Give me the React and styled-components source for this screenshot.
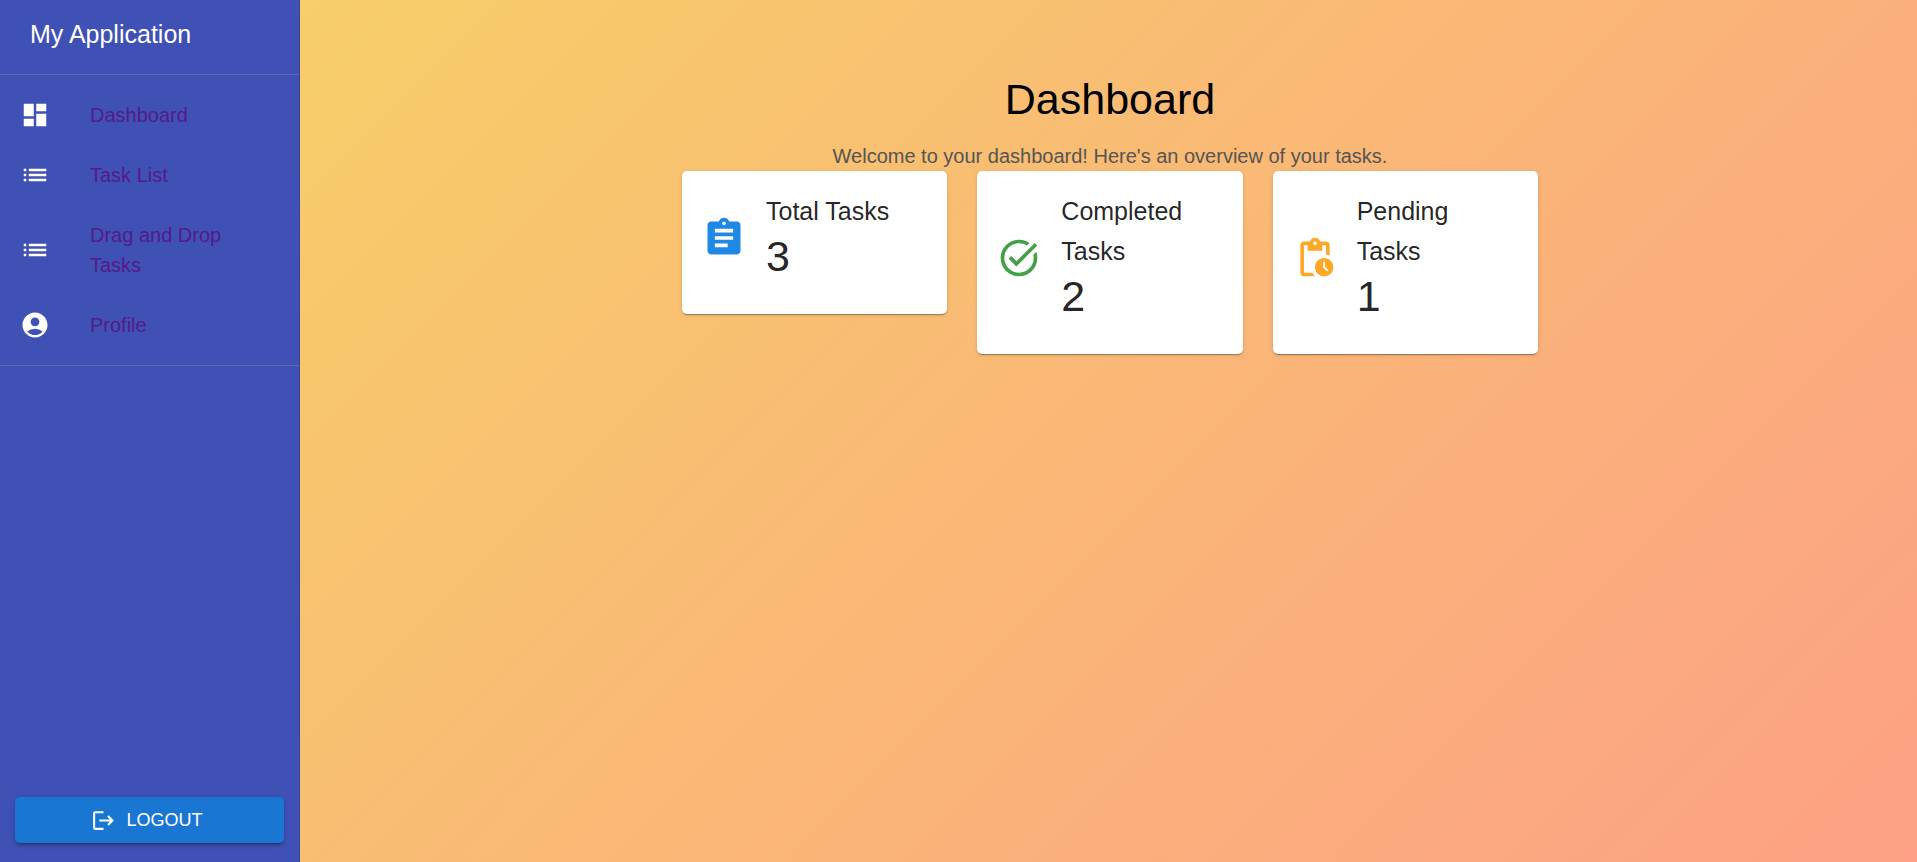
import React from 'react';
import styled, { createGlobalStyle } from 'styled-components';
import {
  MdDashboard,
  MdList,
  MdAccountCircle,
  MdLogout,
  MdAssignment,
  MdTaskAlt,
  MdPendingActions,
} from 'react-icons/md';

const GlobalStyle = createGlobalStyle`
  *, *::before, *::after { box-sizing: border-box; }
  body {
    margin: 0;
    font-family: "Liberation Sans", Arial, sans-serif;
    font-size: 20px;
    line-height: 30px;
    color: rgba(0, 0, 0, 0.87);
  }
`;

const Layout = styled.div`
  display: flex;
  min-height: 100vh;
  background: linear-gradient(135deg, #f6d365 0%, #fda085 100%);
`;

const Sidebar = styled.aside`
  display: flex;
  flex-direction: column;
  flex: 0 0 300px;
  background: #3f51b5;
  border-right: 1px solid rgba(0, 0, 0, 0.15);
`;

const AppTitle = styled.div`
  padding: 14px 30px 20px;
  font-size: 25px;
  line-height: 40px;
  color: #fff;
`;

const NavList = styled.ul`
  list-style: none;
  margin: 0;
  padding: 10px 0;
  border: solid #5d66a9;
  border-width: 1px 0;
`;

const NavLink = styled.a`
  display: flex;
  align-items: center;
  gap: 40px;
  padding: 15px 30px 15px 20px;
  color: #551a8b;
  text-decoration: none;

  svg {
    flex: none;
    width: 30px;
    height: 30px;
    color: #fff;
  }
`;

const SidebarFooter = styled.div`
  margin-top: auto;
  padding: 15px 15px 19px;
`;

const LogoutButton = styled.button`
  display: flex;
  align-items: center;
  justify-content: center;
  gap: 10px;
  width: 100%;
  padding: 8px 20px;
  border: 0;
  border-radius: 5px;
  background: #1976d2;
  color: #fff;
  font: inherit;
  font-size: 18px;
  text-transform: uppercase;
  cursor: pointer;
  box-shadow: 0 4px 1px -3px rgba(0, 0, 0, 0.2), 0 3px 3px rgba(0, 0, 0, 0.14),
    0 1px 6px rgba(0, 0, 0, 0.12);

  svg {
    width: 25px;
    height: 25px;
    margin-left: -5px;
  }
`;

const Main = styled.main`
  flex: 1;
  padding: 73px 27px 30px 30px;
`;

const Content = styled.div`
  max-width: 856px;
  margin: 0 auto;
`;

const PageTitle = styled.h1`
  margin: 0 0 16px;
  font-size: 43px;
  font-weight: 400;
  line-height: 52px;
  text-align: center;
  color: #000;
`;

const Intro = styled.p`
  margin: 0;
  text-align: center;
  color: #555;
`;

const CardGrid = styled.div`
  display: grid;
  grid-template-columns: repeat(3, 1fr);
  align-items: start;
  gap: 30px;
`;

const Card = styled.section`
  display: flex;
  align-items: center;
  gap: 20px;
  padding: 20px 20px 29px;
  border-radius: 5px;
  background: #fff;
  box-shadow: 0 3px 1px -2px rgba(0, 0, 0, 0.2), 0 1px 1px rgba(0, 0, 0, 0.14),
    0 1px 4px rgba(0, 0, 0, 0.12);

  svg {
    flex: none;
    width: 44px;
    height: 44px;
    color: ${({ $accent }) => $accent};
  }
`;

const CardText = styled.div`
  padding-bottom: 4px;
`;

const CardTitle = styled.h2`
  margin: 0;
  font-size: 25px;
  font-weight: 400;
  line-height: 40px;
`;

const CardValue = styled.p`
  margin: 0;
  font-size: 43px;
  line-height: 50px;
`;

const links = [
  { label: 'Dashboard', href: '#dashboard', Icon: MdDashboard },
  { label: 'Task List', href: '#tasks', Icon: MdList },
  { label: 'Drag and Drop Tasks', href: '#board', Icon: MdList },
  { label: 'Profile', href: '#profile', Icon: MdAccountCircle },
];

const stats = [
  { title: 'Total Tasks', value: 3, accent: '#1e88e5', Icon: MdAssignment },
  { title: 'Completed Tasks', value: 2, accent: '#43a047', Icon: MdTaskAlt },
  { title: 'Pending Tasks', value: 1, accent: '#ffa726', Icon: MdPendingActions },
];

export default function App() {
  return (
    <>
      <GlobalStyle />
      <Layout>
        <Sidebar>
          <AppTitle>My Application</AppTitle>
          <nav>
            <NavList>
              {links.map(({ label, href, Icon }) => (
                <li key={label}>
                  <NavLink href={href}>
                    <Icon aria-hidden="true" />
                    <span>{label}</span>
                  </NavLink>
                </li>
              ))}
            </NavList>
          </nav>
          <SidebarFooter>
            <LogoutButton type="button">
              <MdLogout aria-hidden="true" />
              Logout
            </LogoutButton>
          </SidebarFooter>
        </Sidebar>
        <Main>
          <Content>
            <PageTitle>Dashboard</PageTitle>
            <Intro>Welcome to your dashboard! Here's an overview of your tasks.</Intro>
            <CardGrid>
              {stats.map(({ title, value, accent, Icon }) => (
                <Card key={title} $accent={accent}>
                  <Icon aria-hidden="true" />
                  <CardText>
                    <CardTitle>{title}</CardTitle>
                    <CardValue>{value}</CardValue>
                  </CardText>
                </Card>
              ))}
            </CardGrid>
          </Content>
        </Main>
      </Layout>
    </>
  );
}
